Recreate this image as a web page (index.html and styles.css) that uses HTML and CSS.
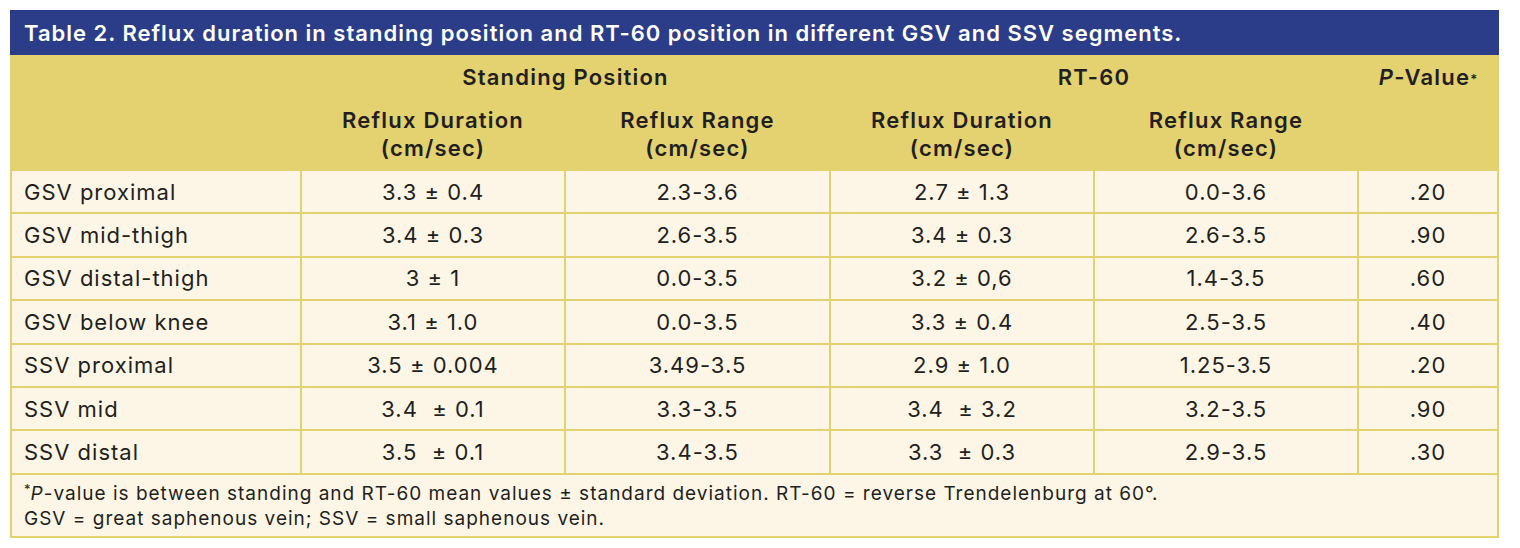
FILE: index.html
```html
<!DOCTYPE html>
<html>
<head>
<meta charset="utf-8">
<link rel="stylesheet" href="styles.css">
</head>
<body>
<div class="tbl">
  <div class="title">Table 2. Reflux duration in standing position and RT-60 position in different GSV and SSV segments.</div>
  <div class="grid">
    <div class="h h1 c1"></div>
    <div class="h h1 span2">Standing Position</div>
    <div class="h h1 span2">RT-60</div>
    <div class="h h1 pv"><i>P</i>-Value<sup>*</sup></div>
    <div class="h h2 c1"></div>
    <div class="h h2">Reflux Duration<br>(cm/sec)</div>
    <div class="h h2">Reflux Range<br>(cm/sec)</div>
    <div class="h h2">Reflux Duration<br>(cm/sec)</div>
    <div class="h h2">Reflux Range<br>(cm/sec)</div>
    <div class="h h2"></div>

    <div class="d l">GSV proximal</div><div class="d">3.3 ± 0.4</div><div class="d">2.3-3.6</div><div class="d">2.7 ± 1.3</div><div class="d">0.0-3.6</div><div class="d">.20</div>
    <div class="d l">GSV mid-thigh</div><div class="d">3.4 ± 0.3</div><div class="d">2.6-3.5</div><div class="d">3.4 ± 0.3</div><div class="d">2.6-3.5</div><div class="d">.90</div>
    <div class="d l">GSV distal-thigh</div><div class="d">3 ± 1</div><div class="d">0.0-3.5</div><div class="d">3.2 ± 0,6</div><div class="d">1.4-3.5</div><div class="d">.60</div>
    <div class="d l">GSV below knee</div><div class="d">3.1 ± 1.0</div><div class="d">0.0-3.5</div><div class="d">3.3 ± 0.4</div><div class="d">2.5-3.5</div><div class="d">.40</div>
    <div class="d l">SSV proximal</div><div class="d">3.5 ± 0.004</div><div class="d">3.49-3.5</div><div class="d">2.9 ± 1.0</div><div class="d">1.25-3.5</div><div class="d">.20</div>
    <div class="d l">SSV mid</div><div class="d">3.4 &nbsp;± 0.1</div><div class="d">3.3-3.5</div><div class="d">3.4 &nbsp;± 3.2</div><div class="d">3.2-3.5</div><div class="d">.90</div>
    <div class="d l">SSV distal</div><div class="d">3.5 &nbsp;± 0.1</div><div class="d">3.4-3.5</div><div class="d">3.3 &nbsp;± 0.3</div><div class="d">2.9-3.5</div><div class="d">.30</div>

    <div class="foot"><sup>*</sup><i>P</i>-value is between standing and RT-60 mean values ± standard deviation. RT-60 = reverse Trendelenburg at 60°.<br>GSV = great saphenous vein; SSV = small saphenous vein.</div>
  </div>
</div>
</body>
</html>
```
FILE: styles.css
```css
html, body {
  margin: 0;
  padding: 0;
  background: #ffffff;
}
body {
  padding: 10px 0 0 10px;
  font-family: Inter, "Open Sans", "Liberation Sans", sans-serif;
  color: #231f20;
}
.tbl {
  width: 1489px;
}
.title {
  background: #2b3d89;
  color: #ffffff;
  font-size: 22px;
  font-weight: 600;
  letter-spacing: 1px;
  height: 45px;
  line-height: 46px;
  padding-left: 14px;
  box-sizing: border-box;
  white-space: nowrap;
}
.grid {
  display: grid;
  grid-template-columns: 288px 262px 263px 262px 262px 138px;
  grid-template-rows: 44px 68px repeat(7, 41.4px) auto;
  gap: 2px;
  padding: 0 2px 2px 2px;
  background: #e4d270;
}
.h {
  background: #e4d270;
  font-size: 22px;
  font-weight: 600;
  letter-spacing: 1.2px;
  text-align: center;
  line-height: 28px;
}
.h1 {
  display: flex;
  align-items: center;
  justify-content: center;
}
.h2 {
  padding-top: 5px;
}
.c1 {
  background: #e4d270;
}
.span2 {
  grid-column: span 2;
}
.pv i {
  font-style: italic;
}
.pv sup, .foot sup {
  font-size: 13px;
  vertical-align: top;
  line-height: 1;
  position: relative;
  top: 2px;
  letter-spacing: 0;
}
.d {
  background: #fdf6e6;
  font-size: 22px;
  letter-spacing: 1px;
  text-align: center;
  display: flex;
  align-items: center;
  justify-content: center;
}
.d.l {
  justify-content: flex-start;
  padding-left: 12px;
}
.foot {
  grid-column: 1 / -1;
  background: #fdf6e6;
  font-size: 19px;
  letter-spacing: 1px;
  line-height: 25px;
  padding: 6px 12px 5px 12px;
}
```
